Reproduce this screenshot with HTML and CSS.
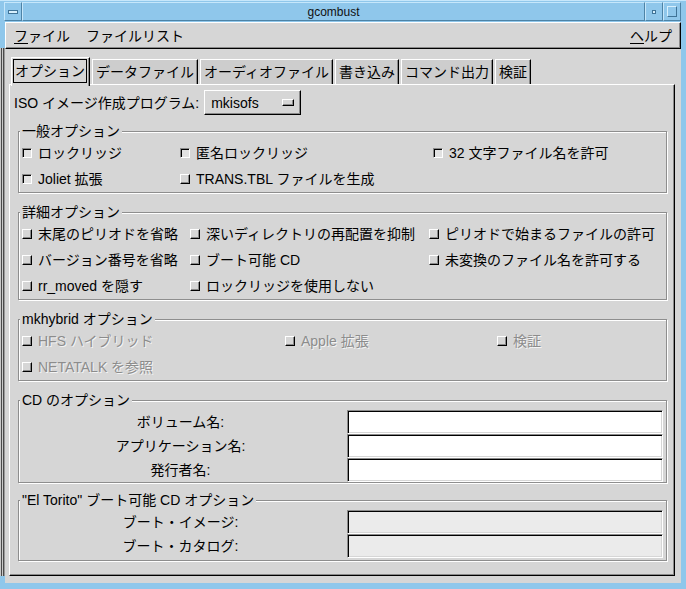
FILE: index.html
```html
<!DOCTYPE html>
<html lang="ja">
<head>
  <meta charset="UTF-8">
  <title>gcombust</title>
  <link rel="stylesheet" href="styles.css">
</head>
<body>
<div class="window">
  <!-- barra de título do gerenciador de janelas -->
  <div class="titlebar">
    <span class="wm-btn wm-menu"><i></i></span>
    <span class="wm-title">gcombust</span>
    <span class="wm-btn wm-min"><i></i></span>
    <span class="wm-btn wm-max"><i></i></span>
  </div>

  <div class="client">
    <div class="menubar">
      <span class="menu"><u>フ</u>ァイル</span>
      <span class="menu">ファイルリスト</span>
      <span class="menu help"><u>ヘ</u>ルプ</span>
    </div>

    <div class="notebook">
      <div class="tabs">
        <span class="tab active"><span class="focus">オプション</span></span>
        <span class="tab">データファイル</span>
        <span class="tab">オーディオファイル</span>
        <span class="tab">書き込み</span>
        <span class="tab">コマンド出力</span>
        <span class="tab">検証</span>
      </div>

      <div class="page">
        <div class="iso-row">
          <span>ISO イメージ作成プログラム:</span>
          <span class="optmenu">mkisofs<i class="ind"></i></span>
        </div>

        <fieldset class="group">
          <legend>一般オプション</legend>
          <div class="checks g1">
            <label class="cb"><span class="check on"></span>ロックリッジ</label>
            <label class="cb"><span class="check on"></span>匿名ロックリッジ</label>
            <label class="cb"><span class="check on"></span>32 文字ファイル名を許可</label>
            <label class="cb"><span class="check on"></span>Joliet 拡張</label>
            <label class="cb"><span class="check"></span>TRANS.TBL ファイルを生成</label>
          </div>
        </fieldset>

        <fieldset class="group">
          <legend>詳細オプション</legend>
          <div class="checks g2">
            <label class="cb"><span class="check"></span>末尾のピリオドを省略</label>
            <label class="cb"><span class="check"></span>深いディレクトリの再配置を抑制</label>
            <label class="cb"><span class="check"></span>ピリオドで始まるファイルの許可</label>
            <label class="cb"><span class="check"></span>バージョン番号を省略</label>
            <label class="cb"><span class="check"></span>ブート可能 CD</label>
            <label class="cb"><span class="check"></span>未変換のファイル名を許可する</label>
            <label class="cb"><span class="check"></span>rr_moved を隠す</label>
            <label class="cb"><span class="check"></span>ロックリッジを使用しない</label>
          </div>
        </fieldset>

        <fieldset class="group">
          <legend>mkhybrid オプション</legend>
          <div class="checks g3 disabled">
            <label class="cb"><span class="check"></span>HFS ハイブリッド</label>
            <label class="cb"><span class="check"></span>Apple 拡張</label>
            <label class="cb"><span class="check"></span>検証</label>
            <label class="cb"><span class="check"></span>NETATALK を参照</label>
          </div>
        </fieldset>

        <fieldset class="group">
          <legend>CD のオプション</legend>
          <div class="form">
            <span class="flabel">ボリューム名:</span><span class="entry"></span>
            <span class="flabel">アプリケーション名:</span><span class="entry"></span>
            <span class="flabel">発行者名:</span><span class="entry"></span>
          </div>
        </fieldset>

        <fieldset class="group torito">
          <legend>"El Torito" ブート可能 CD オプション</legend>
          <div class="form">
            <span class="flabel">ブート・イメージ:</span><span class="entry off"></span>
            <span class="flabel">ブート・カタログ:</span><span class="entry off"></span>
          </div>
        </fieldset>
      </div>
    </div>
  </div>
</div>
</body>
</html>
```

FILE: styles.css
```css
/* janela inteira, tamanho fixo */
html, body {
  margin: 0;
  padding: 0;
}

body {
  width: 686px;
  height: 589px;
  overflow: hidden;
  font-family: "Liberation Sans", "Noto Sans CJK JP", sans-serif;
  font-size: 14px;
  line-height: 18px;
  color: #000;
  background: #8fc7eb;
}

.window {
  height: 589px;
  display: flex;
  flex-direction: column;
  /* listras cinzas da borda esquerda */
  background:
    linear-gradient(to right, #c9c9c9 0 1px, #4a4a4a 1px 2px, #c9c9c9 2px 3px, #4a4a4a 3px 4px, #9a9a9a 4px 5px) no-repeat 0 48px / 5px 528px,
    #8fc7eb;
}

/* —— barra de título —— */
.titlebar {
  height: 21px;
  display: flex;
  padding: 1px 5px 0 4px;
  box-sizing: border-box;
  border-top: 1px solid #c6e7fb;
}

.wm-btn,
.wm-title {
  box-sizing: border-box;
  border: 1px solid;
  border-color: #c6e7fb #4d83a6 #4d83a6 #c6e7fb;
  display: flex;
  align-items: center;
  justify-content: center;
}

.wm-btn { width: 18px; }

.wm-title {
  flex: 1;
  font-size: 12px;
  color: #111;
}

.wm-menu i {
  width: 8px;
  height: 2px;
  border: 1px solid #3f7397;
  background: #d8f0fd;
}

.wm-min i {
  width: 2px;
  height: 2px;
  border: 1px solid #3f7397;
  background: #d8f0fd;
}

.wm-max i {
  width: 8px;
  height: 9px;
  border: 1px solid;
  border-color: #d8f0fd #3f7397 #3f7397 #d8f0fd;
}

/* —— área cliente —— */
.client {
  flex: 1;
  margin: 1px 5px 6px 5px;
  background: #d6d6d6;
  display: flex;
  flex-direction: column;
}

.menubar {
  height: 27px;
  box-sizing: border-box;
  display: flex;
  align-items: center;
  padding: 0 8px;
  border: 1px solid;
  border-color: #fff #000 #000 #fff;
  box-shadow: inset -1px -1px 0 #8a8a8a;
}

.menu { margin-right: 16px; }
.menu.help { margin: 0 0 0 auto; }
.menu u { text-underline-offset: 2px; }

/* —— abas —— */
.notebook {
  flex: 1;
  margin: 8px 6px 7px 4px;
  display: flex;
  flex-direction: column;
}

.tabs {
  display: flex;
  align-items: flex-end;
  height: 27px;
  padding-left: 2px;
}

.tab {
  height: 25px;
  box-sizing: border-box;
  padding: 0 3px;
  margin-left: 2px;
  display: flex;
  align-items: center;
  background: #cdcdcd;
  border-top: 1px solid #fff;
  border-left: 1px solid #fff;
  border-right: 1px solid #000;
  box-shadow: inset -1px 0 0 #8a8a8a;
}

.tab.active {
  height: 29px;
  margin: 0 0 -2px;
  padding: 0 2px 2px 1px;
  background: #d6d6d6;
  position: relative;
  z-index: 1;
}

.focus {
  border: 1px solid #000;
  padding: 2px 1px;
  line-height: 18px;
}

.page {
  flex: 1;
  padding: 5px 7px 0 4px;
  border: 1px solid;
  border-color: #fff #000 #000 #fff;
  box-shadow: inset -1px -1px 0 #8a8a8a;
}

.iso-row {
  display: flex;
  align-items: center;
  gap: 5px;
  height: 25px;
}

.optmenu {
  width: 97px;
  height: 25px;
  box-sizing: border-box;
  padding: 0 6px;
  display: flex;
  align-items: center;
  justify-content: space-between;
  border: 1px solid;
  border-color: #fff #000 #000 #fff;
  box-shadow: inset -1px -1px 0 #8a8a8a;
}

.ind {
  width: 12px;
  height: 7px;
  box-sizing: border-box;
  border: 1px solid;
  border-color: #fff #000 #000 #fff;
  box-shadow: inset -1px -1px 0 #8a8a8a;
}

/* —— molduras (GtkFrame) —— */
.group {
  margin: 7px 0 0 4px;
  padding: 0 3px;
  min-width: 0;
  border: 1px solid #8e8e8e;
  box-shadow: inset 1px 1px 0 #fff, 1px 1px 0 #fff;
}

.group + .group { margin-top: 10px; }
.group.torito { margin-top: 8px; padding-bottom: 2px; }

.group legend {
  padding: 0 2px;
  margin-left: -2px;
  line-height: 18px;
  background: #d6d6d6;
}

.checks {
  display: grid;
  grid-auto-rows: 26px;
}

.g1 { grid-template-columns: 158px 253px 1fr; }
.g2 { grid-template-columns: 168px 239px 1fr; }
.g3 { grid-template-columns: 263px 212px 1fr; }

.cb {
  display: flex;
  align-items: center;
  gap: 6px;
  white-space: nowrap;
}

/* caixinha de seleção estilo GTK 1 */
.check {
  width: 10px;
  height: 10px;
  box-sizing: border-box;
  background: #d6d6d6;
  border: 1px solid;
  border-color: #fff #000 #000 #fff;
  box-shadow: inset -1px -1px 0 #8a8a8a;
}

.check.on {
  border-color: #8a8a8a #fff #fff #8a8a8a;
  box-shadow: inset 1px 1px 0 #000;
  background: #e2e2e2;
}

.disabled .cb {
  color: #8c8c8c;
  text-shadow: 1px 1px 0 #f4f4f4;
}

/* formulário com rótulos centrados */
.form {
  display: grid;
  grid-template-columns: 1fr 316px;
  grid-auto-rows: 24px;
  padding-top: 1px;
}

.flabel {
  display: flex;
  align-items: center;
  justify-content: center;
  padding-right: 8px;
}

.entry {
  background: #fff;
  border: 1px solid;
  border-color: #8a8a8a #fff #fff #8a8a8a;
  box-shadow: inset 1px 1px 0 #000, inset -1px -1px 0 #d6d6d6;
}

.entry.off { background: #ebebeb; }
```
